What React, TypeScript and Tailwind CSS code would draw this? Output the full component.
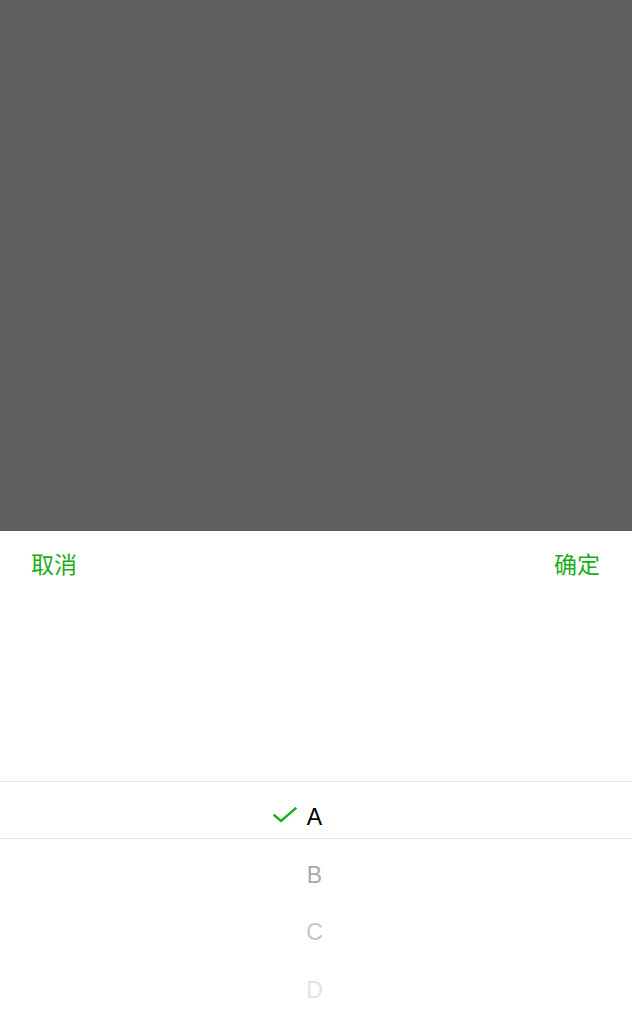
const OPTIONS = [
    { label: "A", color: "text-black" },
    { label: "B", color: "text-[#a9a9a9]" },
    { label: "C", color: "text-[#c6c6c6]" },
    { label: "D", color: "text-[#e2e2e2]" },
];

const CheckIcon = () => (
    <svg width="24" height="16" viewBox="0 0 24 16" fill="none">
        <path
            d="M1.5 8.5L8 14L22.5 1.5"
            stroke="#1aad19"
            strokeWidth="2.4"
            strokeLinecap="square"
        />
    </svg>
);

const App = () => {
    return (
        <div
            className="flex h-[1022px] w-full flex-col overflow-hidden bg-white"
            style={{ fontFamily: '"Liberation Sans", "Noto Sans CJK SC", sans-serif' }}
        >
            <div className="h-[531px] shrink-0 bg-[#606060]" />
            <div className="flex flex-1 flex-col bg-white">
                <div className="flex h-[68px] items-center justify-between pb-[3px] pl-[31px] pr-[32px] text-[23px] text-[#1aad19] [font-family:'Noto_Sans_CJK_SC',sans-serif]">
                    <span>取消</span>
                    <span>确定</span>
                </div>
                <div className="h-[182px]" />
                <div className="flex flex-col">
                    {OPTIONS.map((opt, i) => (
                        <div
                            key={opt.label}
                            className={`flex items-center justify-center pr-[3px] pt-[14px] text-[23px] ${opt.color} ${
                                i === 0
                                    ? "h-[58px] border-y border-[#e5e5e5]"
                                    : "h-[57.5px]"
                            }`}
                        >
                            <div className="relative">
                                {i === 0 && (
                                    <span className="absolute right-[calc(100%+10px)] top-[7px]">
                                        <CheckIcon />
                                    </span>
                                )}
                                <span>{opt.label}</span>
                            </div>
                        </div>
                    ))}
                </div>
            </div>
        </div>
    );
};

export default App;
